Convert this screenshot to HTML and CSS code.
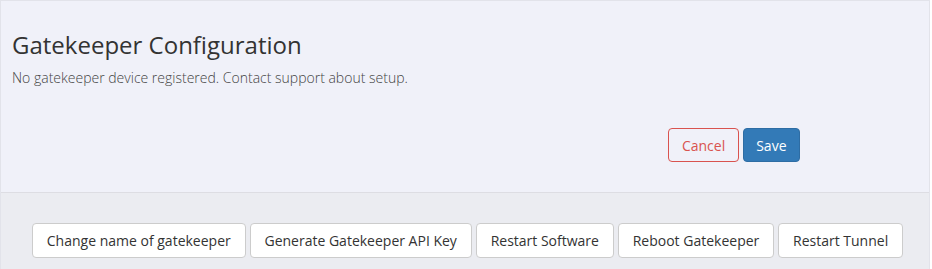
FILE: index.html
```html
<!DOCTYPE html>
<html lang="en">
<head>
    <meta charset="UTF-8">
    <title>Gatekeeper Configuration</title>
    <link rel="stylesheet" href="styles.css">
</head>
<body>
    <div class="panel">
        <div class="panel-body">
            <h2>Gatekeeper Configuration</h2>
            <p class="note">No gatekeeper device registered. Contact support about setup.</p>
            <div class="form-actions">
                <button class="btn btn-cancel">Cancel</button>
                <button class="btn btn-save">Save</button>
            </div>
        </div>
        <div class="panel-footer">
            <button class="btn">Change name of gatekeeper</button>
            <button class="btn">Generate Gatekeeper API Key</button>
            <button class="btn">Restart Software</button>
            <button class="btn">Reboot Gatekeeper</button>
            <button class="btn">Restart Tunnel</button>
        </div>
    </div>
</body>
</html>
```

FILE: styles.css
```css
body {
    font-family: "Open Sans", sans-serif;
    margin: 0;
    background-color: #ffffff;
    color: #333;
}
.panel {
    width: 928px;
    border: 1px solid #e2e3ea;
    background-color: #f0f1f9;
}
.panel-body {
    padding: 28px 11px 30px;
}
h2 {
    font-size: 24px;
    font-weight: 400;
    margin: 0 0 7px;
    line-height: 32px;
}
.note {
    font-size: 14px;
    line-height: 20px;
    font-weight: 300;
    margin: 0;
    color: #444;
}
.form-actions {
    display: flex;
    justify-content: flex-end;
    gap: 4px;
    margin-top: 40px;
    padding-right: 118px;
}
.btn {
    font-family: "Open Sans", sans-serif;
    font-size: 14px;
    height: 35px;
    padding: 0 13.8px;
    border: 1px solid #ccc;
    border-radius: 4px;
    background-color: #fff;
    color: #333;
}
.form-actions .btn {
    height: 34px;
    padding: 0 12.5px;
}
.btn-cancel {
    border-color: #d9534f;
    color: #d9534f;
    background-color: #f0f1f9;
}
.btn-save {
    background-color: #337ab7;
    border-color: #2e6da4;
    color: #fff;
}
.panel-footer {
    border-top: 1px solid #dddde3;
    background-color: #ebecf1;
    padding: 30px 0 30px 31px;
}
```
